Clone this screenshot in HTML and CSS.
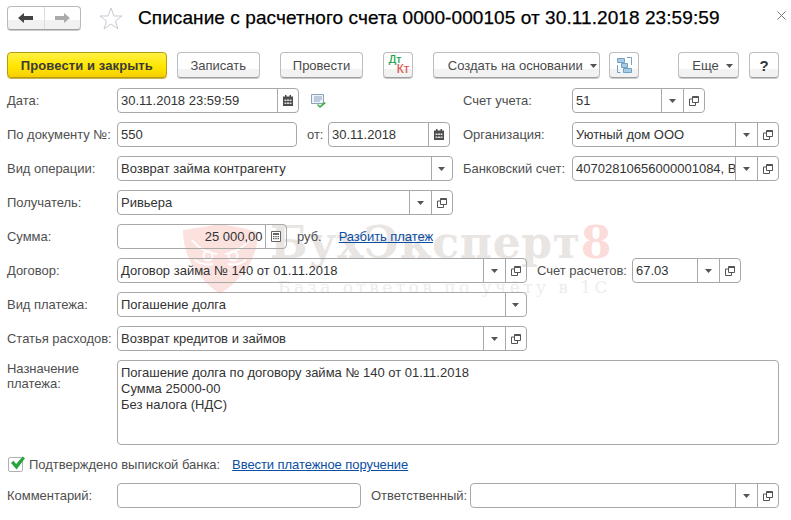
FILE: index.html
```html
<!DOCTYPE html>
<html lang="ru">
<head>
<meta charset="utf-8">
<title>Списание с расчетного счета</title>
<link rel="stylesheet" href="styles.css">
</head>
<body>
<svg class="defs" width="0" height="0" aria-hidden="true">
  <symbol id="drop" viewBox="0 0 7 4"><path d="M0 0h7L3.500 4z" fill="#555"/></symbol>
  <symbol id="open" viewBox="0 0 10 10"><path d="M3.500 .5h6v6h-6z M3.500 3H.5v6.500h6V6.500" fill="none" stroke="#555"/><path d="M3.500 .5h6v1.500h-6z" fill="#555"/></symbol>
  <symbol id="cal" viewBox="0 0 10 11"><path d="M0 1.500h10V11H0z" fill="#4d4d4d"/><path d="M2 0h1.500v3H2zM6.500 0H8v3H6.500z" fill="#4d4d4d"/><path d="M1.500 4.500h2v1.500h-2zM4 4.500h2v1.500H4zM6.500 4.500h2v1.500h-2zM1.500 7.500h2V9h-2zM4 7.500h2V9H4zM6.500 7.500h2V9h-2z" fill="#ddd"/></symbol>
  <symbol id="calc" viewBox="0 0 10 11"><path d="M.5 .5h9v10h-9z" fill="#fff" stroke="#666"/><path d="M2 2h6v2H2z" fill="#666"/><path d="M2 5h1.500v1.200H2zM4.300 5h1.500v1.200H4.300zM6.500 5H8v1.200H6.500zM2 7h1.500v1.200H2zM4.300 7h1.500v1.200H4.300zM6.500 7H8v1.200H6.500z" fill="#666"/></symbol>
</svg>

<div class="page">
  <div class="watermark" aria-hidden="true">
    <svg class="wm-shield" viewBox="0 0 75 70" width="75" height="70">
      <path d="M0 6 C 14 4 26 2 37 0 C 49 2 61 4 75 8 C 75 36 58 56 37 70 C 17 56 0 36 0 6z" fill="#fbe2df"/>
      <path d="M9 16 Q18 28 34 30 M66 16 Q57 28 42 30 M12 36 Q20 42 30 40 M63 36 Q55 42 45 40" fill="none" stroke="#fff" stroke-width="2"/>
      <circle cx="25" cy="32" r="4.500" fill="none" stroke="#fff" stroke-width="2"/>
      <circle cx="50" cy="32" r="4.500" fill="none" stroke="#fff" stroke-width="2"/>
    </svg>
    <div class="wm-brand">БухЭксперт<span class="wm-eight">8</span></div>
    <div class="wm-sub">База ответов по учёту в 1С</div>
  </div>

  <header class="titlebar">
    <div class="nav">
      <span class="nav-btn"><svg width="15" height="10" viewBox="0 0 15 10"><path d="M0 5l6-5v3h9v4H6v3z" fill="#444"/></svg></span>
      <span class="nav-btn"><svg width="15" height="10" viewBox="0 0 15 10"><path d="M15 5L9 0v3H0v4h9v3z" fill="#aaa"/></svg></span>
    </div>
    <svg class="star" width="24" height="23" viewBox="0 0 24 23"><path d="M12 1l3 8h8l-6.500 5 2.500 8-7-5-7 5 2.500-8L1 9h8z" fill="#fff" stroke="#c3cbd3"/></svg>
    <h1 class="title">Списание с расчетного счета 0000-000105 от 30.11.2018 23:59:59</h1>
    <svg class="close" width="9" height="9" viewBox="0 0 9 9"><path d="M.5 .5l8 8M8.500 .5l-8 8" stroke="#777" fill="none"/></svg>
  </header>

  <div class="toolbar">
    <button class="btn primary b160">Провести и закрыть</button>
    <button class="btn b83">Записать</button>
    <button class="btn b84 m10">Провести</button>
    <button class="btn b30 m10 dtkt"><span class="dt">Дт</span><span class="kt">Кт</span></button>
    <button class="btn b167 m10 pad9">Создать на основании<svg class="caret" width="7" height="4"><use href="#drop"/></svg></button>
    <button class="btn b30 tight"><svg width="15" height="16" viewBox="0 0 15 16"><path d="M.5 8v7.500h3M10 .5h4.500V8" fill="none" stroke="#6ea3c9"/><path d="M.5 1.500h7v4h-7zM4.500 6.500h6v4h-6zM6.500 11.500h8v4h-8z" fill="#a9cbe3" stroke="#6ea3c9"/></svg></button>
    <button class="btn b61 push pad5">Еще<svg class="caret" width="7" height="4"><use href="#drop"/></svg></button>
    <button class="btn b30 q">?</button>
  </div>

  <main class="form">
    <div class="row two">
      <label class="lbl">Дата:</label>
      <div class="cell">
        <div class="field w182"><span class="val">30.11.2018 23:59:59</span><span class="fb"><svg width="10" height="11"><use href="#cal"/></svg></span></div>
        <svg class="status" width="16" height="14" viewBox="0 0 16 14"><path d="M.5 .5h12v9H.5z" fill="#eef3f8" stroke="#8ba3bb"/><path d="M3 3h8M3 5h8M3 7h6" stroke="#8ba3bb"/><path d="M7 10l2 2 4-4 2 1-6 5-3-3z" fill="#3bb143"/></svg>
      </div>
      <label class="lbl">Счет учета:</label>
      <div class="field w133"><span class="val">51</span><span class="fb"><svg width="7" height="4"><use href="#drop"/></svg></span><span class="fb"><svg width="10" height="10"><use href="#open"/></svg></span></div>
    </div>

    <div class="row two">
      <label class="lbl">По документу №:</label>
      <div class="cell">
        <div class="field w180"><span class="val">550</span></div>
        <label class="lbl from">от:</label>
        <div class="field w122"><span class="val">30.11.2018</span><span class="fb"><svg width="10" height="11"><use href="#cal"/></svg></span></div>
      </div>
      <label class="lbl">Организация:</label>
      <div class="field w207"><span class="val">Уютный дом ООО</span><span class="fb"><svg width="7" height="4"><use href="#drop"/></svg></span><span class="fb"><svg width="10" height="10"><use href="#open"/></svg></span></div>
    </div>

    <div class="row two">
      <label class="lbl">Вид операции:</label>
      <div class="cell">
        <div class="field w336"><span class="val">Возврат займа контрагенту</span><span class="fb"><svg width="7" height="4"><use href="#drop"/></svg></span></div>
      </div>
      <label class="lbl">Банковский счет:</label>
      <div class="field w207"><span class="val">40702810656000001084, ВТБ</span><span class="fb"><svg width="7" height="4"><use href="#drop"/></svg></span><span class="fb"><svg width="10" height="10"><use href="#open"/></svg></span></div>
    </div>

    <div class="row">
      <label class="lbl wl">Получатель:</label>
      <div class="field w336"><span class="val">Ривьера</span><span class="fb"><svg width="7" height="4"><use href="#drop"/></svg></span><span class="fb"><svg width="10" height="10"><use href="#open"/></svg></span></div>
    </div>

    <div class="row">
      <label class="lbl wl">Сумма:</label>
      <div class="field w170"><span class="val right">25 000,00</span><span class="fb"><svg width="10" height="11"><use href="#calc"/></svg></span></div>
      <span class="lbl rub">руб.</span>
      <a class="link split" href="#">Разбить платеж</a>
    </div>

    <div class="row">
      <label class="lbl wl">Договор:</label>
      <div class="field w410"><span class="val">Договор займа № 140 от 01.11.2018</span><span class="fb"><svg width="7" height="4"><use href="#drop"/></svg></span><span class="fb"><svg width="10" height="10"><use href="#open"/></svg></span></div>
      <label class="lbl calc-lbl">Счет расчетов:</label>
      <div class="field w109"><span class="val">67.03</span><span class="fb"><svg width="7" height="4"><use href="#drop"/></svg></span><span class="fb"><svg width="10" height="10"><use href="#open"/></svg></span></div>
    </div>

    <div class="row">
      <label class="lbl wl">Вид платежа:</label>
      <div class="field w410"><span class="val">Погашение долга</span><span class="fb"><svg width="7" height="4"><use href="#drop"/></svg></span></div>
    </div>

    <div class="row">
      <label class="lbl wl">Статья расходов:</label>
      <div class="field w410"><span class="val">Возврат кредитов и займов</span><span class="fb"><svg width="7" height="4"><use href="#drop"/></svg></span><span class="fb"><svg width="10" height="10"><use href="#open"/></svg></span></div>
    </div>

    <div class="row top">
      <label class="lbl wl multi">Назначение платежа:</label>
      <div class="area">Погашение долга по договору займа № 140 от 01.11.2018<br>Сумма 25000-00<br>Без налога (НДС)</div>
    </div>

    <div class="row check">
      <span class="box"><svg class="tick" width="14" height="14" viewBox="0 0 15 14"><path d="M0 7l2.500-2.500L5.500 8 12.500 0 15 2 6 14z" fill="#27a53a"/></svg></span>
      <label class="lbl chk">Подтверждено выпиской банка:</label>
      <a class="link" href="#">Ввести платежное поручение</a>
    </div>

    <div class="row">
      <label class="lbl wl">Комментарий:</label>
      <div class="field w244"></div>
      <label class="lbl resp">Ответственный:</label>
      <div class="field w309"><span class="val"></span><span class="fb"><svg width="7" height="4"><use href="#drop"/></svg></span><span class="fb"><svg width="10" height="10"><use href="#open"/></svg></span></div>
    </div>
  </main>
</div>
</body>
</html>
```
FILE: styles.css
```css
* { box-sizing: border-box; }
html, body { margin: 0; padding: 0; }
body {
  width: 791px;
  height: 520px;
  overflow: hidden;
  background: #fff;
  font-family: "Liberation Sans", Arial, sans-serif;
  font-size: 13px;
  letter-spacing: 0;
  color: #4f4f4f;
}
.defs { position: absolute; }
.page { position: relative; width: 791px; height: 520px; padding: 6px 12px 0 7px; }

/* watermark lies behind the transparent form controls */
.watermark { position: absolute; left: 0; top: 0; width: 791px; height: 520px; pointer-events: none; }
.wm-shield { position: absolute; left: 183px; top: 224px; }
.wm-brand {
  position: absolute; left: 270px; top: 218px;
  font-family: "DejaVu Serif", serif; font-weight: 700; font-size: 44px; line-height: 50px;
  letter-spacing: .7px; color: #e9e5e3; white-space: nowrap;
}
.wm-eight { color: #fbdcd8; }
.wm-sub {
  position: absolute; left: 278px; top: 277px;
  font-family: "DejaVu Serif", serif; font-size: 17px; line-height: 20px;
  letter-spacing: 3.45px; color: #ededed; white-space: nowrap;
}

.titlebar { position: relative; display: flex; align-items: center; height: 24px; }
.nav {
  display: flex; width: 74px; height: 24px;
  border: 1px solid #b9b9b9; border-bottom-color: #a0a0a0; border-radius: 4px;
  background: linear-gradient(#fff 0, #fff 60%, #f1f1f1 60%, #f1f1f1 100%);
  box-shadow: 0 1px 0 #ccc;
}
.nav-btn { flex: 1; display: flex; align-items: center; justify-content: center; }
.nav-btn + .nav-btn { border-left: 1px solid #ddd; }
.star { margin-left: 18px; }
.title {
  margin: 0 0 0 15px;
  font-size: 19px; font-weight: 400; letter-spacing: .08px; color: #000; white-space: nowrap;
  -webkit-text-stroke: .25px #000; line-height: 24px;
}
.close { position: absolute; right: -7px; top: 5px; }

.toolbar { display: flex; gap: 10px; margin-top: 22px; height: 26px; }
.btn {
  height: 26px; padding: 0; display: flex; align-items: center; justify-content: center; gap: 7px;
  font: inherit; letter-spacing: inherit; color: #4a4a4a;
  border: 1px solid #bdbdbd; border-bottom-color: #9f9f9f; border-radius: 4px;
  background: linear-gradient(#fff 0, #fff 66%, #f2f2f2 66%, #f2f2f2 100%);
  box-shadow: 0 1px 0 #c9c9c9;
}
.primary {
  border-color: #b89a10; color: #3a3a3a; font-weight: 700; letter-spacing: .1px;
  background: linear-gradient(#fff045 0, #ffe600 55%, #f7cf00 100%);
  box-shadow: 0 1px 0 #c9b44a;
}
.b160 { width: 160px; }
.b83 { width: 83px; }
.b84 { width: 84px; }
.b30 { width: 30px; }
.b167 { width: 167px; }
.b61 { width: 61px; }
.m10 { margin-left: 10px; }
.pad9 { padding-left: 11px; }
.pad5 { padding-left: 8px; }
.tight { margin-left: -1px; }
.push { margin-left: 29px; }
.q { font-size: 15px; font-weight: 700; color: #333; }
.caret { margin-top: 2px; }
.dtkt { flex-direction: column; gap: 0; font-size: 11px; font-weight: 400; line-height: 10px; letter-spacing: 0; padding-bottom: 2px; -webkit-text-stroke: .2px; }
.dt { color: #16a04a; margin-right: 7px; }
.kt { color: #e0504a; margin-left: 9px; font-size: 12px; }

.form { position: relative; display: flex; flex-direction: column; gap: 9px; margin-top: 10px; }
.row { display: flex; align-items: center; height: 25px; }
.row.two { display: grid; grid-template-columns: 110px 346px 109px 207px; }
.row.top { align-items: flex-start; height: 85px; }
.row.check { height: 17px; margin-top: 2px; margin-bottom: 1px; }
.cell { display: flex; align-items: center; }
.lbl { white-space: nowrap; letter-spacing: -.03px; }
.wl { width: 110px; flex: none; }
.multi { white-space: normal; width: 90px; margin-right: 20px; padding-top: 1px; line-height: 15px; }
.from { margin-left: 10px; margin-right: 6px; width: 15px; }
.rub { margin-left: 10px; }
.split { margin-left: 17px; }
.calc-lbl { margin-left: 10px; width: 95px; }
.resp { margin-left: 10px; width: 99px; }
.status { margin-left: 12px; }
.chk { margin-left: 6px; margin-right: 12px; }

.field {
  display: flex; align-items: stretch; height: 25px;
  border: 1px solid #a8a8a8; border-radius: 4px; color: #333;
}
.val { flex: 1; min-width: 0; padding: 0 2px 0 3px; line-height: 23px; white-space: nowrap; overflow: hidden; }
.right { text-align: right; }
.fb { flex: none; width: 21.5px; display: flex; align-items: center; justify-content: center; border-left: 1px solid #a8a8a8; }
.w109 { width: 109px; }
.w122 { width: 122px; }
.w133 { width: 133px; }
.w170 { width: 170px; }
.w180 { width: 180px; }
.w182 { width: 182px; }
.w207 { width: 207px; }
.w244 { width: 244px; }
.w309 { width: 309px; }
.w336 { width: 336px; }
.w410 { width: 410px; }

.area {
  width: 662px; height: 85px; padding: 4px 3px;
  border: 1px solid #a8a8a8; border-radius: 4px; color: #333; line-height: 16px;
}
.box {
  width: 15px; height: 15px; margin-left: 1px; flex: none; position: relative;
  border: 1px solid #b0b0b0; border-radius: 2px;
}
.tick { position: absolute; left: 2px; top: -2px; }
.link { color: #0b4ea2; text-decoration: underline; white-space: nowrap; letter-spacing: -.07px; }
```
